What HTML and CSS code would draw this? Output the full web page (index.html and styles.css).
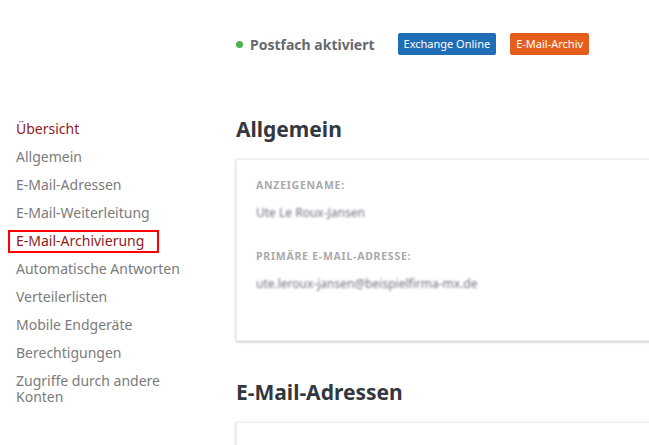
FILE: index.html
```html
<!DOCTYPE html>
<html>
<head>
    <title>Postfach</title>
    <link rel="stylesheet" href="styles.css">
</head>
<body>
    <div class="status-bar">
        <span class="status"><span class="dot"></span>Postfach aktiviert</span>
        <span class="badge badge-blue">Exchange Online</span>
        <span class="badge badge-orange">E-Mail-Archiv</span>
    </div>

    <div class="page">
        <ul class="side-nav">
            <li><a class="active">Übersicht</a></li>
            <li><a>Allgemein</a></li>
            <li><a>E-Mail-Adressen</a></li>
            <li><a>E-Mail-Weiterleitung</a></li>
            <li><a class="active marked">E-Mail-Archivierung</a></li>
            <li><a>Automatische Antworten</a></li>
            <li><a>Verteilerlisten</a></li>
            <li><a>Mobile Endgeräte</a></li>
            <li><a>Berechtigungen</a></li>
            <li><a>Zugriffe durch andere Konten</a></li>
        </ul>

        <div class="content">
            <h2>Allgemein</h2>
            <div class="card">
                <div class="field">
                    <div class="label">Anzeigename:</div>
                    <div class="value">Ute Le Roux-Jansen</div>
                </div>
                <div class="field">
                    <div class="label">Primäre E-Mail-Adresse:</div>
                    <div class="value">ute.leroux-jansen@beispielfirma-mx.de</div>
                </div>
            </div>

            <h2>E-Mail-Adressen</h2>
            <div class="card"></div>
        </div>
    </div>
</body>
</html>
```

FILE: styles.css
```css
body {
    margin: 0;
    font-family: "Noto Sans", "Open Sans", sans-serif;
    background-color: #fff;
    overflow: hidden;
}

.status-bar {
    display: flex;
    align-items: center;
    padding: 33px 0 0 236px;
    height: 22px;
}

.status {
    display: flex;
    align-items: center;
    font-size: 14px;
    font-weight: bold;
    color: #666a6e;
    margin-right: 23px;
}

.dot {
    width: 7px;
    height: 7px;
    border-radius: 50%;
    background-color: #4caf50;
    margin-right: 7px;
}

.badge {
    display: inline-block;
    height: 22px;
    line-height: 22px;
    padding: 0 6px;
    font-size: 11px;
    color: #fff;
    border-radius: 2px;
    margin-right: 14px;
}

.badge-blue {
    background-color: #1f6db5;
}

.badge-orange {
    background-color: #e55e1d;
}

.page {
    display: flex;
    padding-top: 60px;
}

.side-nav {
    list-style: none;
    margin: 0;
    padding: 0 0 0 16px;
    width: 220px;
    flex-shrink: 0;
}

.side-nav li {
    padding: 6px 0;
    max-width: 165px;
    font-size: 14px;
    line-height: 16px;
}

.side-nav a {
    display: inline-block;
    color: #7b7b7b;
    position: relative;
}

.side-nav a.active {
    color: #8e1b1b;
}

.side-nav a.marked::after {
    content: "";
    position: absolute;
    left: -8px;
    right: -15px;
    top: -3px;
    bottom: -4px;
    border: 2px solid #f00;
}

.content {
    flex: 1;
    min-width: 0;
}

h2 {
    margin: 0;
    font-size: 21px;
    line-height: 28px;
    color: #333840;
}

.card {
    margin: 16px 0 37px 0;
    width: 430px;
    height: 182px;
    padding: 18px 19px;
    box-sizing: border-box;
    border: 1px solid #eee;
    border-right: none;
    box-shadow: 0 1px 3px rgba(0, 0, 0, 0.22);
}

.field {
    margin-bottom: 27px;
}

.label {
    font-size: 10.5px;
    font-weight: bold;
    text-transform: uppercase;
    letter-spacing: 0.75px;
    color: #a9a9ab;
    line-height: 14px;
}

.value {
    margin-top: 13px;
    display: inline-block;
    font-size: 12px;
    line-height: 16px;
    color: #6f7480;
    filter: blur(1.3px);
}
```
